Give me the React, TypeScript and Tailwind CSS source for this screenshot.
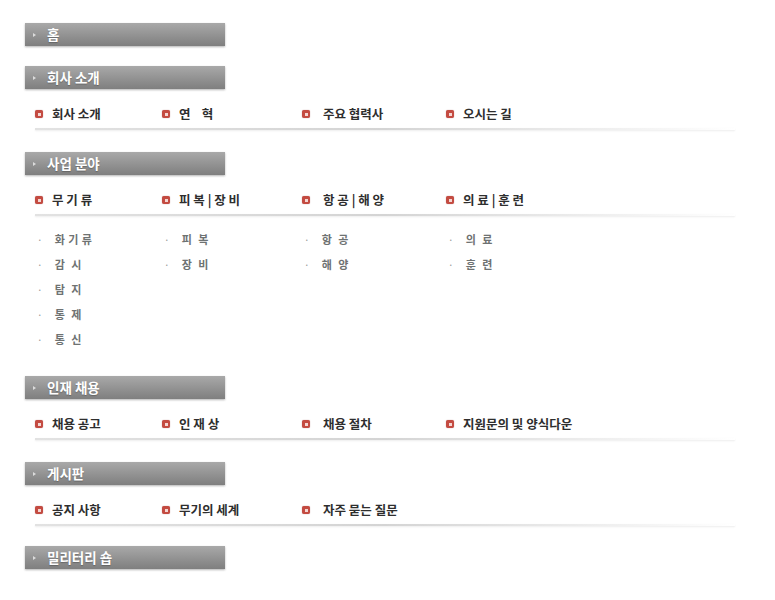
import React from "react";

type Item = { label: string; sub?: string[] };

interface Section {
  title: string;
  items?: Item[];
}

const sections: Section[] = [
  { title: "홈" },
  {
    title: "회사 소개",
    items: [{ label: "회사 소개" }, { label: "연    혁" }, { label: "주요 협력사" }, { label: "오시는 길" }],
  },
  {
    title: "사업 분야",
    items: [
      { label: "무 기 류", sub: ["화 기 류", "감  시", "탐  지", "통  제", "통  신"] },
      { label: "피 복 | 장 비", sub: ["피  복", "장  비"] },
      { label: "항 공 | 해 양", sub: ["항  공", "해  양"] },
      { label: "의 료 | 훈 련", sub: ["의  료", "훈  련"] },
    ],
  },
  {
    title: "인재 채용",
    items: [{ label: "채용 공고" }, { label: "인 재 상" }, { label: "채용 절차" }, { label: "지원문의 및 양식다운" }],
  },
  {
    title: "게시판",
    items: [{ label: "공지 사항" }, { label: "무기의 세계" }, { label: "자주 묻는 질문" }],
  },
  { title: "밀리터리 숍" },
];

// column widths, measured from bullet to bullet
const colWidths = ["w-[127px]", "w-[140px]", "w-[144px]", "w-[150px]"];

function Bullet() {
  return (
    <span className="flex h-[8px] w-[8px] items-center justify-center rounded-[2px] bg-[#c44b41] shadow-[0_0_1px_rgba(120,20,20,0.6)]">
      <span className="h-[3px] w-[3px] bg-[#f4d6d2]" />
    </span>
  );
}

function Bar({ title }: { title: string }) {
  return (
    <div className="flex h-[23px] w-[200px] items-center bg-gradient-to-b from-[#a9a9a9] to-[#7f7f7f] shadow-[0_1px_2px_rgba(0,0,0,0.3)]">
      <span className="ml-[8px] h-0 w-0 border-y-[2.5px] border-l-[3px] border-y-transparent border-l-[#dcdcdc]" />
      <span className="ml-[11px] text-[13.5px] font-bold leading-none text-white [text-shadow:0_1px_1px_rgba(0,0,0,0.25)]">
        {title}
      </span>
    </div>
  );
}

export default function App() {
  return (
    <div
      className="min-h-[600px] w-[775px] bg-white pl-[25px] pt-[23px]"
      style={{ fontFamily: '"Noto Sans CJK KR", "Noto Sans", sans-serif' }}
    >
      {sections.map((section, i) => {
        const hasSub = section.items?.some((it) => it.sub);
        const mb = i === 0 || section.title === "게시판" ? "mb-[20px]" : "mb-[22px]";
        return (
          <div key={section.title} className={mb}>
            <Bar title={section.title} />
            {section.items && (
              <>
                <div className="mt-[12px] flex h-[26px] items-center pl-[10px]">
                  {section.items.map((item, j) => (
                    <div key={item.label} className={`flex items-center ${colWidths[j]}`}>
                      <Bullet />
                      <span
                        className={`whitespace-pre text-[12.5px] font-bold leading-none text-[#2e2e2e] ${
                          j === 2 ? "ml-[13px]" : "ml-[9px]"
                        }`}
                      >
                        {item.label}
                      </span>
                    </div>
                  ))}
                </div>
                <div className="ml-[10px] mt-[1px] h-[2px] w-[700px] bg-gradient-to-r from-[#e2e2e2] via-[#d4d4d4] to-transparent shadow-[0_1px_2px_rgba(0,0,0,0.08)]" />
                {hasSub && (
                  <div className="mt-[11px] pb-[2px] flex pl-[10px]">
                    {section.items.map((item, j) => (
                      <div key={item.label} className={`flex flex-col ${colWidths[j]}`}>
                        {item.sub?.map((s) => (
                          <div key={s} className="flex h-[25px] items-center">
                            <span className="ml-[2px] text-[10px] leading-none text-[#999]">·</span>
                            <span className="ml-[12px] whitespace-pre text-[11px] font-bold leading-none tracking-[0.5px] text-[#6e7272]">
                              {s}
                            </span>
                          </div>
                        ))}
                      </div>
                    ))}
                  </div>
                )}
              </>
            )}
          </div>
        );
      })}
    </div>
  );
}
